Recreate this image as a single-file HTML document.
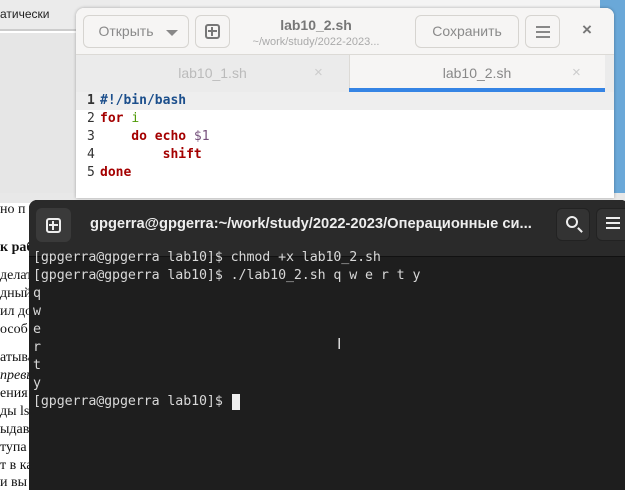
<!DOCTYPE html>
<html><head><meta charset="utf-8"><style>
*{margin:0;padding:0;box-sizing:border-box}
body{width:625px;height:483px;overflow:hidden;position:relative;background:#fff;font-family:"Liberation Sans","DejaVu Sans",sans-serif}
.abs{position:absolute}
.mono{font-family:"DejaVu Sans Mono","Liberation Mono",monospace}
.doc{font-family:"Liberation Serif",serif;font-size:14px;color:#111;position:absolute;left:0;white-space:nowrap}
.btn{position:absolute;border:1px solid #d6d4d0;border-radius:6px;background:#f6f5f4;color:#8a8a8a;font-size:14px;text-align:center}
.code{position:absolute;left:100px;font-size:13px;font-weight:bold;line-height:18px;white-space:pre}
.ln{position:absolute;left:87px;font-size:13px;line-height:18px;color:#333}
.t{position:absolute;left:33px;font-size:13.3px;line-height:18px;color:#d8d8d8;white-space:pre;letter-spacing:-0.1px}
</style></head><body>
<div class="abs" style="left:0;top:0;width:120px;height:30px;background:#ebebeb"></div>
<div class="abs" style="left:0;top:7px;font-size:12px;color:#222">атически</div>
<div class="abs" style="left:0;top:29px;width:120px;height:2px;background:#ccc"></div>
<div class="abs" style="left:0;top:33px;width:120px;height:160px;background:#e6e6e6"></div>
<div class="abs" style="left:120px;top:0;width:200px;height:10px;background:#f0f0f0"></div>
<div class="abs" style="left:320px;top:0;width:305px;height:10px;background:#f4f4f4"></div>
<div class="abs" style="left:600px;top:0;width:25px;height:200px;background:#6aa8d8"></div>
<div class="abs" style="left:0;top:193px;width:625px;height:10px;background:#e8e8e8"></div>
<div class="doc" style="top:202px">но п</div>
<div class="doc" style="top:240px;font-weight:bold">к раб</div>
<div class="doc" style="top:268px">делат</div>
<div class="doc" style="top:286px">дный</div>
<div class="doc" style="top:304px">ил до</div>
<div class="doc" style="top:322px">особ</div>
<div class="doc" style="top:350px">атыва</div>
<div class="doc" style="top:368px;font-style:italic">превы</div>
<div class="doc" style="top:386px">ения</div>
<div class="doc" style="top:404px">ды ls</div>
<div class="doc" style="top:422px">ыдав</div>
<div class="doc" style="top:440px">тупа</div>
<div class="doc" style="top:458px">т в ка</div>
<div class="doc" style="top:475px">и вы</div>

<!-- editor -->
<div class="abs" style="left:76px;top:8px;width:538px;height:190px;background:#fff;border-radius:8px 8px 0 0;box-shadow:0 0 3px rgba(0,0,0,.3);overflow:hidden">
 <div class="abs" style="left:0;top:0;width:538px;height:47px;background:#f6f5f4;border-bottom:1px solid #dcdad6"></div>
 <div class="btn" style="left:7px;top:7px;width:106px;height:33px;line-height:31px;padding-right:20px">Открыть</div>
 <div class="abs" style="left:90px;top:22px;border-left:6px solid transparent;border-right:6px solid transparent;border-top:6px solid #888"></div>
 <div class="btn" style="left:119px;top:7px;width:35px;height:33px"></div>
 <div class="abs" style="left:129px;top:16px;width:15px;height:15px;border:2px solid #777;border-radius:3px"></div>
 <div class="abs" style="left:135px;top:19px;width:2px;height:9px;background:#777"></div>
 <div class="abs" style="left:132px;top:22px;width:9px;height:2px;background:#777"></div>
 <div class="abs" style="left:160px;top:9px;width:160px;text-align:center;font-size:14px;font-weight:bold;color:#777">lab10_2.sh</div>
 <div class="abs" style="left:160px;top:28px;width:160px;text-align:center;font-size:11px;color:#aaa">~/work/study/2022-2023...</div>
 <div class="btn" style="left:339px;top:7px;width:104px;height:33px;line-height:31px">Сохранить</div>
 <div class="btn" style="left:449px;top:7px;width:35px;height:33px"></div>
 <div class="abs" style="left:460px;top:18px;width:14px;height:2px;background:#888;box-shadow:0 5px 0 #888,0 10px 0 #888"></div>
 <div class="abs" style="left:506px;top:12px;font-size:17px;color:#777;font-weight:bold">×</div>
 <div class="abs" style="left:0;top:47px;width:538px;height:37px;background:#ebebeb"></div>
 <div class="abs" style="left:0;top:57px;width:273px;text-align:center;font-size:14px;color:#bbb">lab10_1.sh</div>
 <div class="abs" style="left:238px;top:56px;font-size:15px;color:#ccc">×</div>
 <div class="abs" style="left:273px;top:47px;width:256px;height:37px;background:#f6f5f4;border-left:1px solid #dcdad6"></div>
 <div class="abs" style="left:273px;top:57px;width:256px;text-align:center;font-size:14px;color:#888">lab10_2.sh</div>
 <div class="abs" style="left:496px;top:56px;font-size:15px;color:#ccc">×</div>
 <div class="abs" style="left:273px;top:80px;width:256px;height:4px;background:#3584e4"></div>
 <div class="abs" style="left:0;top:84px;width:538px;height:18px;background:#eeeeee"></div>
</div>
<div class="ln mono" style="top:92px;font-weight:bold">1</div>
<div class="ln mono" style="top:110px">2</div>
<div class="ln mono" style="top:128px">3</div>
<div class="ln mono" style="top:146px">4</div>
<div class="ln mono" style="top:164px">5</div>
<div class="code mono" style="top:92px;color:#1c4f8c">#!/bin/bash</div>
<div class="code mono" style="top:110px;color:#a40000">for <span style="color:#4e9a06;font-weight:normal">i</span></div>
<div class="code mono" style="top:128px;color:#a40000">    do echo <span style="color:#75507b;font-weight:normal">$1</span></div>
<div class="code mono" style="top:146px;color:#a40000">        shift</div>
<div class="code mono" style="top:164px;color:#a40000">done</div>

<!-- terminal -->
<div class="abs" style="left:29px;top:200px;width:600px;height:290px;background:#1e1e1e;border-radius:8px 8px 0 0;overflow:hidden">
 <div class="abs" style="left:0;top:0;width:600px;height:57px;background:#2a2a2a;border-bottom:1px solid #111"></div>
 <div class="abs" style="left:7px;top:8px;width:35px;height:34px;background:#3a3a3a;border-radius:6px"></div>
 <div class="abs" style="left:17px;top:18px;width:15px;height:15px;border:2px solid #eee;border-radius:3px"></div>
 <div class="abs" style="left:23px;top:21px;width:2px;height:9px;background:#eee"></div>
 <div class="abs" style="left:20px;top:24px;width:9px;height:2px;background:#eee"></div>
 <div class="abs" style="left:61px;top:16px;font-size:14.7px;font-weight:bold;color:#eee;white-space:nowrap">gpgerra@gpgerra:~/work/study/2022-2023/Операционные си...</div>
 <div class="abs" style="left:527px;top:8px;width:34px;height:33px;background:#333;border-radius:6px;border:1px solid #222"></div>
 <div class="abs" style="left:537px;top:16px;width:12px;height:12px;border:2px solid #eee;border-radius:50%"></div>
 <div class="abs" style="left:548px;top:29px;width:6px;height:2px;background:#eee;transform:rotate(45deg)"></div>
 <div class="abs" style="left:567px;top:8px;width:40px;height:33px;background:#333;border-radius:6px;border:1px solid #222"></div>
 <div class="abs" style="left:577px;top:17px;width:14px;height:2px;background:#eee;box-shadow:0 5px 0 #eee,0 10px 0 #eee"></div>
</div>
<div class="t mono" style="top:249px">[gpgerra@gpgerra lab10]$ chmod +x lab10_2.sh</div>
<div class="t mono" style="top:267px">[gpgerra@gpgerra lab10]$ ./lab10_2.sh q w e r t y</div>
<div class="t mono" style="top:285px">q</div>
<div class="t mono" style="top:303px">w</div>
<div class="t mono" style="top:321px">e</div>
<div class="t mono" style="top:339px">r</div>
<div class="t mono" style="top:357px">t</div>
<div class="t mono" style="top:375px">y</div>
<div class="t mono" style="top:393px">[gpgerra@gpgerra lab10]$ </div>
<div class="abs" style="left:232px;top:394px;width:8px;height:16px;background:#eee"></div>
<div class="abs" style="left:337px;top:336px;font-size:16px;color:#ddd">I</div>
</body></html>
